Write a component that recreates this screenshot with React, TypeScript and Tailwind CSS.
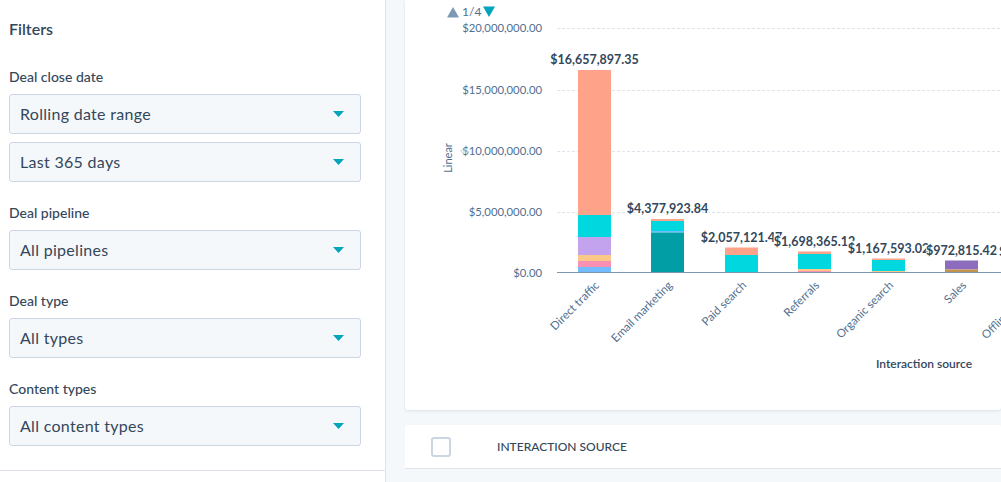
import React from "react";

const ink = "#33475b";
const axis = "#516f90";

const c = {
  salmon: "#fea28a",
  cyan: "#00d7df",
  lavender: "#c4a3ee",
  peach: "#fcc887",
  pink: "#f890b4",
  blue: "#72bbff",
  teal: "#019fa5",
  purple: "#8d6cbd",
  gold: "#c4924f",
};

type Seg = [number, number, string];

const bars: { label: string; value: string; x: number; segs: Seg[] }[] = [
  {
    label: "Direct traffic",
    value: "$16,657,897.35",
    x: 578,
    segs: [
      [70, 215, c.salmon],
      [215, 237, c.cyan],
      [237, 255, c.lavender],
      [255, 261, c.peach],
      [261, 267, c.pink],
      [267, 272, c.blue],
    ],
  },
  {
    label: "Email marketing",
    value: "$4,377,923.84",
    x: 651,
    segs: [
      [219, 221, c.salmon],
      [221, 231, c.cyan],
      [231, 232.5, c.blue],
      [232.5, 272, c.teal],
    ],
  },
  {
    label: "Paid search",
    value: "$2,057,121.47",
    x: 725,
    segs: [
      [247.5, 255, c.salmon],
      [255, 272, c.cyan],
    ],
  },
  {
    label: "Referrals",
    value: "$1,698,365.12",
    x: 798,
    segs: [
      [251.5, 254, c.salmon],
      [254, 269, c.cyan],
      [269, 271, c.peach],
      [271, 272, c.pink],
    ],
  },
  {
    label: "Organic search",
    value: "$1,167,593.02",
    x: 872,
    segs: [
      [258.5, 260, c.salmon],
      [260, 271, c.cyan],
      [271, 272, c.peach],
    ],
  },
  {
    label: "Sales",
    value: "$972,815.42",
    x: 945,
    segs: [
      [260.5, 269.5, c.purple],
      [269.5, 272, c.gold],
    ],
  },
  { label: "Offline sources", value: "$612,409.18", x: 1018, segs: [] },
];

const ticks = [
  { y: 28, text: "$20,000,000.00" },
  { y: 90, text: "$15,000,000.00" },
  { y: 151, text: "$10,000,000.00" },
  { y: 212, text: "$5,000,000.00" },
];

const filters = [
  { label: "Deal close date", values: ["Rolling date range", "Last 365 days"] },
  { label: "Deal pipeline", values: ["All pipelines"] },
  { label: "Deal type", values: ["All types"] },
  { label: "Content types", values: ["All content types"] },
];

function Select({ value }: { value: string }) {
  return (
    <div className="flex h-10 w-[352px] items-center justify-between rounded-[3px] border border-[#cbd6e2] bg-[#f5f8fa] pl-[10px] pr-4">
      <span className="text-[16px] tracking-[0.3px] text-[#33475b]">{value}</span>
      <svg width="11" height="6" viewBox="0 0 11 6">
        <path d="M0 0h11L5.5 6z" fill="#00a4bd" />
      </svg>
    </div>
  );
}

function Chart() {
  return (
    <svg width="596" height="410" viewBox="405 0 596 410" fontFamily="Lato, sans-serif">
      {/* pager */}
      <path d="M447 17.5L453 7l6 10.5z" fill="#7c98b6" />
      <text x="462" y="16" fontSize="12" fill={axis}>
        1/4
      </text>
      <path d="M483 6.5h12l-6 10.5z" fill="#00a4bd" />

      {/* grid */}
      {ticks.map((t) => (
        <g key={t.y}>
          <line x1="557" x2="1001" y1={t.y + 0.5} y2={t.y + 0.5} stroke="#dfe3eb" strokeDasharray="3 2" />
          <text x="542" y={t.y + 4} fontSize="11.3" fill={axis} textAnchor="end">
            {t.text}
          </text>
        </g>
      ))}
      <text x="542" y="277" fontSize="11.3" fill={axis} textAnchor="end">
        $0.00
      </text>

      <text x="452" y="158" fontSize="11" fill={axis} textAnchor="middle" transform="rotate(-90 452 158)">
        Linear
      </text>
      <text x="468" y="151" fontSize="9" fill="#cbd6e2" textAnchor="middle" transform="rotate(-90 468 151)">
        $
      </text>

      {/* bars */}
      {bars.map((b) => (
        <g key={b.label}>
          {b.segs.map(([y0, y1, col], i) => (
            <rect key={i} x={b.x} y={y0} width="33" height={y1 - y0} fill={col} />
          ))}
        </g>
      ))}
      <line x1="557" x2="1001" y1="272.5" y2="272.5" stroke="#7c98b6" />

      {/* value labels */}
      {bars.map((b) => (
        <text
          key={b.value}
          x={b.x + 16.5}
          y={(b.segs[0]?.[0] ?? 262) - 6}
          fontSize="12.5"
          fontWeight="700"
          fill={ink}
          textAnchor="middle"
          stroke="#fff"
          strokeWidth="2"
          paintOrder="stroke"
        >
          {b.value}
        </text>
      ))}

      {/* category labels */}
      {bars.map((b) => {
        const ax = b.x + 22;
        const ay = 286;
        return (
          <text
            key={b.label + "-x"}
            x={ax}
            y={ay}
            fontSize="11.5"
            fill={axis}
            textAnchor="end"
            transform={`rotate(-45 ${ax} ${ay})`}
          >
            {b.label}
          </text>
        );
      })}

      <text x="924" y="368" fontSize="12" fontWeight="600" fill={ink} textAnchor="middle">
        Interaction source
      </text>
    </svg>
  );
}

export default function App() {
  return (
    <div className="flex h-[482px] w-[1001px] overflow-hidden bg-[#f5f8fa] font-['Lato',sans-serif] text-[#33475b]">
      <aside className="flex w-[386px] shrink-0 flex-col border-r border-[#dfe3eb] bg-white">
        <div className="pl-[9px] pb-6">
          <h2 className="pt-[19px] text-[16px] font-semibold leading-5">Filters</h2>
          {filters.map((f, i) => (
            <div key={f.label} className={i === 0 ? "mt-[28px]" : "mt-[21px]"}>
              <div className="mb-[7px] text-[14px] font-medium leading-5">{f.label}</div>
              <div className="flex flex-col gap-2">
                {f.values.map((v) => (
                  <Select key={v} value={v} />
                ))}
              </div>
            </div>
          ))}
        </div>
        <div className="flex-1 border-t border-[#dfe3eb]" />
      </aside>

      <main className="min-w-0 flex-1 pl-[19px]">
        <div className="h-[410px] overflow-hidden rounded-b-[3px] bg-white shadow-[0_1px_3px_rgba(45,62,80,0.12)]">
          <Chart />
        </div>
        <div className="mt-[15px] rounded-t-[3px] bg-white">
          <div className="flex h-[44px] items-center border-b border-[#dfe3eb] pl-[26px]">
            <div className="h-5 w-5 rounded-[3px] border-2 border-[#cbd6e2] bg-white" />
            <span className="ml-[46px] text-[12px] font-medium uppercase text-[#33475b]">Interaction source</span>
          </div>
        </div>
      </main>
    </div>
  );
}
